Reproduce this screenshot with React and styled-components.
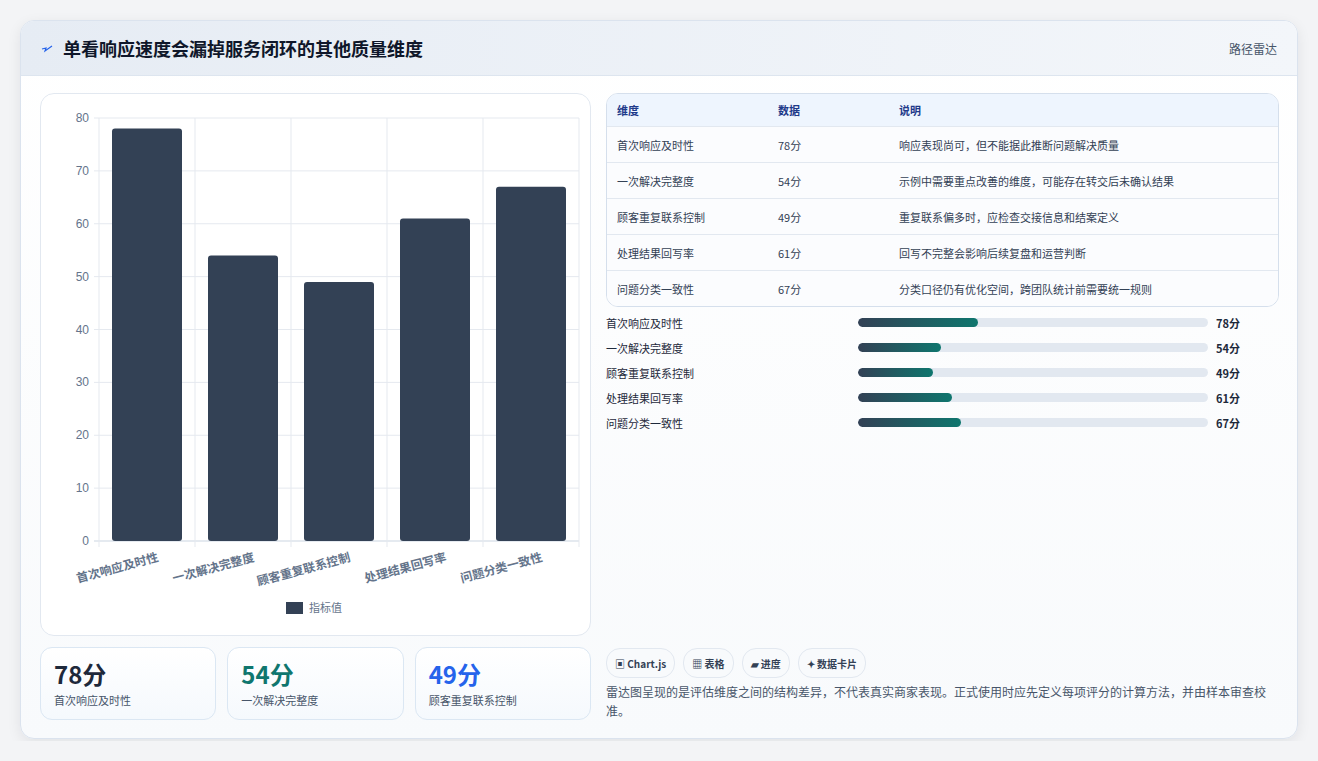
import React from "react";
import styled, { createGlobalStyle } from "styled-components";

const G = createGlobalStyle`
  body{margin:0;background:#f3f4f6;font-family:"Noto Sans CJK SC","Noto Sans",sans-serif;color:#1e293b;}
`;
const data = [
  ["首次响应及时性", 78, "响应表现尚可，但不能据此推断问题解决质量"],
  ["一次解决完整度", 54, "示例中需要重点改善的维度，可能存在转交后未确认结果"],
  ["顾客重复联系控制", 49, "重复联系偏多时，应检查交接信息和结案定义"],
  ["处理结果回写率", 61, "回写不完整会影响后续复盘和运营判断"],
  ["问题分类一致性", 67, "分类口径仍有优化空间，跨团队统计前需要统一规则"],
];
const Page = styled.div`padding:20px 20px 0 20px;height:741px;box-sizing:border-box;`;
const Card = styled.div`border:1px solid #dbe3ee;border-radius:14px;background:linear-gradient(180deg,#fff,#f8fafc);box-shadow:0 4px 14px rgba(15,23,42,.08);overflow:hidden;`;
const Header = styled.div`height:54px;display:flex;align-items:center;justify-content:space-between;padding:0 20px;background:linear-gradient(90deg,#e6ecf4,#f3f6fa);border-bottom:1px solid #dde5ef;`;
const Title = styled.h1`margin:0;font-size:18px;font-weight:700;color:#0f172a;display:flex;align-items:center;gap:10px;`;
const Tag = styled.span`font-size:12px;color:#475569;`;
const Body = styled.div`display:grid;grid-template-columns:551px 1fr;gap:15px;padding:17px 18px 18px 19px;`;
const Col = styled.div`display:flex;flex-direction:column;gap:11px;`;
const ChartBox = styled.div`height:543px;box-sizing:border-box;border:1px solid #e2e8f0;border-radius:14px;background:#fff;`;
const Stats = styled.div`display:grid;grid-template-columns:repeat(3,1fr);gap:11px;`;
const Stat = styled.div`height:73px;box-sizing:border-box;border:1px solid #dbe7f3;border-radius:12px;background:linear-gradient(180deg,#fff,#f5f9fd);padding:10px 13px;`;
const Big = styled.div`font-size:24px;font-weight:700;color:${p=>p.c};line-height:32px;`;
const Small = styled.div`font-size:11px;color:#475569;margin-top:2px;`;
const Table = styled.div`border:1px solid #d5dfec;border-radius:12px;overflow:hidden;background:#fff;`;
const Row = styled.div`display:grid;grid-template-columns:161px 121px 1fr;height:35px;align-items:center;padding-left:10px;font-size:11px;color:#334155;border-top:${p=>p.h?"none":"1px solid #e2e8f0"};background:${p=>p.h?"#eef5fe":"#fbfcfe"};font-weight:${p=>p.h?700:400};${p=>p.h&&"color:#1e3a8a;height:32px;"}`;
const Bars = styled.div`display:flex;flex-direction:column;gap:8px;margin-top:7px;`;
const BarRow = styled.div`display:grid;grid-template-columns:252px 350px 1fr;align-items:center;height:17px;font-size:11px;`;
const Track = styled.div`height:9px;border-radius:5px;background:#e2e8f0;overflow:hidden;`;
const Fill = styled.div`height:100%;border-radius:5px;background:linear-gradient(90deg,#334155,#0f766e);`;
const Val = styled.b`padding-left:8px;font-size:11px;`;
const Spacer = styled.div`flex:1;`;
const Chips = styled.div`display:flex;gap:8px;`;
const Chip = styled.span`font-size:10px;font-weight:600;padding:0 8px;height:28px;display:flex;align-items:center;border:1px solid #e2e8f0;border-radius:14px;background:#f8fafc;color:#334155;`;
const Note = styled.p`margin:4px 0 0;font-size:12px;line-height:19px;color:#475569;`;

function Chart(){
  const x0=58,y0=24,h=423,w=480,cw=96;
  const y=v=>y0+h-v/80*h;
  return <svg width="551" height="543">
    {[0,10,20,30,40,50,60,70,80].map(v=><g key={v}>
      <line x1={x0-5} x2={x0+w} y1={y(v)} y2={y(v)} stroke={v===0?"#cbd5e1":"#e5e9ef"}/>
      <text x={x0-10} y={y(v)+4} fontSize="12" fill="#64748b" textAnchor="end" fontFamily="Liberation Sans">{v}</text></g>)}
    {[0,1,2,3,4,5].map(i=><line key={i} x1={x0+i*cw} x2={x0+i*cw} y1={y0} y2={y0+h+6} stroke="#e5e9ef"/>)}
    {data.map((d,i)=><g key={i}>
      <rect x={x0+i*cw+13} y={y(d[1])} width="70" height={y(0)-y(d[1])} rx="3" fill="#334155"/>
      <text transform={`translate(${x0+i*cw+60},${y0+h+20}) rotate(-15)`} fontSize="12" fontWeight="600" fill="#64748b" textAnchor="end">{d[0]}</text></g>)}
    <rect x="245" y="508" width="17" height="12" fill="#334155"/>
    <text x="268" y="518" fontSize="11" fill="#64748b">指标值</text>
  </svg>;
}

export default function App(){
  return <Page><G/><Card>
    <Header><Title><svg width="12" height="10" viewBox="0 0 12 10"><path d="M1 6 L5 5 L4 8 L11 3" stroke="#2563eb" strokeWidth="1.2" fill="none"/></svg>单看响应速度会漏掉服务闭环的其他质量维度</Title><Tag>路径雷达</Tag></Header>
    <Body>
      <Col>
        <ChartBox><Chart/></ChartBox>
        <Stats>
          <Stat><Big c="#1e293b">78分</Big><Small>首次响应及时性</Small></Stat>
          <Stat><Big c="#0f766e">54分</Big><Small>一次解决完整度</Small></Stat>
          <Stat><Big c="#2563eb">49分</Big><Small>顾客重复联系控制</Small></Stat>
        </Stats>
      </Col>
      <Col style={{gap:0}}>
        <Table>
          <Row h><span>维度</span><span>数据</span><span>说明</span></Row>
          {data.map(d=><Row key={d[0]}><span>{d[0]}</span><span>{d[1]}分</span><span>{d[2]}</span></Row>)}
        </Table>
        <Bars>{data.map(d=><BarRow key={d[0]}><span>{d[0]}</span><Track><Fill style={{width:`${d[1]*0.44}%`}}/></Track><Val>{d[1]}分</Val></BarRow>)}</Bars>
        <Spacer/>
        <Chips><Chip>▣ Chart.js</Chip><Chip>▦ 表格</Chip><Chip>▰ 进度</Chip><Chip>✦ 数据卡片</Chip></Chips>
        <Note>雷达图呈现的是评估维度之间的结构差异，不代表真实商家表现。正式使用时应先定义每项评分的计算方法，并由样本审查校准。</Note>
      </Col>
    </Body>
  </Card></Page>;
}
